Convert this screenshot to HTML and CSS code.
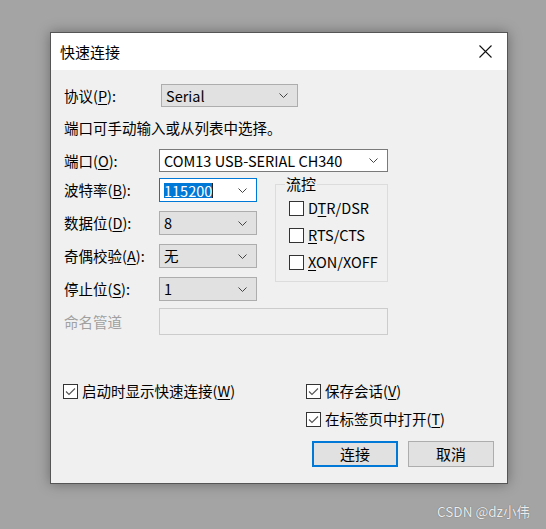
FILE: index.html
```html
<!DOCTYPE html>
<html lang="zh-CN">
<head>
<meta charset="utf-8">
<title>快速连接</title>
<link rel="stylesheet" href="styles.css">
</head>
<body>
<div class="desk">
  <div class="dialog">
    <div class="titlebar">
      <span class="title">快速连接</span>
      <svg class="close" width="13" height="13" viewBox="0 0 13 13"><path d="M0.5 0.5 L12.5 12.5 M12.5 0.5 L0.5 12.5" stroke="#111" stroke-width="1.1" fill="none"/></svg>
    </div>
    <div class="body">
      <div class="row proto">
        <span class="lbl">协议(<u>P</u>):</span>
        <div class="combo gray w-proto"><span class="val">Serial</span><svg class="chev" width="9" height="5" viewBox="0 0 9 5"><path d="M0.5 0.5 L4.5 4.5 L8.5 0.5" stroke="#444" fill="none"/></svg></div>
      </div>
      <div class="hint">端口可手动输入或从列表中选择。</div>
      <div class="row port">
        <span class="lbl">端口(<u>O</u>):</span>
        <div class="combo white w-wide"><span class="val">COM13 USB-SERIAL CH340</span><svg class="chev" width="9" height="5" viewBox="0 0 9 5"><path d="M0.5 0.5 L4.5 4.5 L8.5 0.5" stroke="#444" fill="none"/></svg></div>
      </div>
      <div class="mid">
        <div class="params">
          <div class="row prow">
            <span class="lbl">波特率(<u>B</u>):</span>
            <div class="combo white focus w-small"><span class="val"><span class="sel">115200</span><span class="caret"></span></span><svg class="chev" width="9" height="5" viewBox="0 0 9 5"><path d="M0.5 0.5 L4.5 4.5 L8.5 0.5" stroke="#444" fill="none"/></svg></div>
          </div>
          <div class="row prow">
            <span class="lbl">数据位(<u>D</u>):</span>
            <div class="combo gray w-small"><span class="val">8</span><svg class="chev" width="9" height="5" viewBox="0 0 9 5"><path d="M0.5 0.5 L4.5 4.5 L8.5 0.5" stroke="#444" fill="none"/></svg></div>
          </div>
          <div class="row prow">
            <span class="lbl">奇偶校验(<u>A</u>):</span>
            <div class="combo gray w-small"><span class="val">无</span><svg class="chev" width="9" height="5" viewBox="0 0 9 5"><path d="M0.5 0.5 L4.5 4.5 L8.5 0.5" stroke="#444" fill="none"/></svg></div>
          </div>
          <div class="row prow">
            <span class="lbl">停止位(<u>S</u>):</span>
            <div class="combo gray w-small"><span class="val">1</span><svg class="chev" width="9" height="5" viewBox="0 0 9 5"><path d="M0.5 0.5 L4.5 4.5 L8.5 0.5" stroke="#444" fill="none"/></svg></div>
          </div>
        </div>
        <fieldset class="flow">
          <legend>流控</legend>
          <div class="chk"><span class="box"></span><span>D<u>T</u>R/DSR</span></div>
          <div class="chk"><span class="box"></span><span><u>R</u>TS/CTS</span></div>
          <div class="chk"><span class="box"></span><span><u>X</u>ON/XOFF</span></div>
        </fieldset>
      </div>
      <div class="row pipe-row">
        <span class="lbl dis">命名管道</span>
        <div class="pipe"></div>
      </div>
      <div class="bottom">
        <div class="left">
          <div class="chk"><span class="box"><svg width="13" height="13" viewBox="0 0 13 13"><path d="M2 6.5 L5 9.5 L11 3.5" stroke="#555" stroke-width="1.1" fill="none"/></svg></span><span>启动时显示快速连接(<u>W</u>)</span></div>
        </div>
        <div class="right">
          <div class="chk"><span class="box"><svg width="13" height="13" viewBox="0 0 13 13"><path d="M2 6.5 L5 9.5 L11 3.5" stroke="#555" stroke-width="1.1" fill="none"/></svg></span><span>保存会话(<u>V</u>)</span></div>
          <div class="chk second"><span class="box"><svg width="13" height="13" viewBox="0 0 13 13"><path d="M2 6.5 L5 9.5 L11 3.5" stroke="#555" stroke-width="1.1" fill="none"/></svg></span><span>在标签页中打开(<u>T</u>)</span></div>
          <div class="buttons">
            <button class="btn default">连接</button>
            <button class="btn">取消</button>
          </div>
        </div>
      </div>
    </div>
  </div>
  <div class="watermark">CSDN @dz小伟</div>
</div>
</body>
</html>
```
FILE: styles.css
```css
* { box-sizing: border-box; }
html, body { margin: 0; padding: 0; }
body {
  width: 546px;
  height: 529px;
  overflow: hidden;
  background: #a4a4a4;
  font-family: "Noto Sans CJK SC", "Noto Sans", sans-serif;
  font-size: 14.5px;
  line-height: 20px;
  color: #000;
}
.desk {
  position: relative;
  width: 546px;
  height: 529px;
  padding: 32px 0 0 50px;
}
.dialog {
  width: 458px;
  height: 452px;
  border: 1px solid #555;
  background: #f0f0f0;
  box-shadow: 0 0 12px rgba(0,0,0,0.35);
  display: flex;
  flex-direction: column;
}
.titlebar {
  height: 37px;
  background: #fff;
  display: flex;
  align-items: center;
  justify-content: space-between;
  padding: 0 15px 0 9px;
  flex: none;
}
.title { font-size: 15px; }
.close { display: block; }
.body {
  padding: 14px 13px 0 13px;
  display: flex;
  flex-direction: column;
}
.row {
  display: flex;
  align-items: center;
}
.lbl {
  width: 95px;
  flex: none;
  white-space: nowrap;
}
.lbl.dis { color: #a0a0a0; }
u { text-decoration: underline; text-underline-offset: 2px; text-decoration-thickness: 1px; }
.combo {
  position: relative;
  display: flex;
  align-items: center;
  justify-content: space-between;
  padding: 0 9px 0 4px;
  border: 1px solid #adadad;
  height: 23px;
  flex: none;
}
.combo.gray { background: #e1e1e1; }
.combo.white { background: #fff; border-color: #7a7a7a; }
.combo.focus { border-color: #0078d7; }
.w-proto { width: 137px; margin-left: 2px; }
.w-wide { width: 229px; }
.w-small { width: 98px; height: 24px; }
.val { display: flex; align-items: center; }
.sel {
  background: #0078d7;
  color: #fff;
  line-height: 15px;
}
.caret { width: 1px; height: 15px; background: #222; }
.chev { display: block; }
.proto { height: 23px; }
.hint { margin-top: 11px; }
.port { margin-top: 11px; }
.mid {
  margin-top: 2px;
  display: flex;
  align-items: flex-start;
}
.params {
  padding-top: 4px;
  display: flex;
  flex-direction: column;
  gap: 9px;
  width: 193px;
}
.flow {
  margin: 0 0 0 18px;
  width: 113px;
  border: 1px solid #dcdcdc;
  padding: 4px 4px 9px 13px;
  min-width: 0;
}
.flow legend {
  padding: 0 1px;
  margin-left: -4px;
  font-size: 15px;
  line-height: 20px;
}
.chk {
  display: flex;
  align-items: center;
  height: 20px;
  white-space: nowrap;
}
.flow .chk + .chk { margin-top: 7px; }
.box {
  width: 15px;
  height: 15px;
  border: 1px solid #333;
  background: #fff;
  margin-right: 4px;
  flex: none;
  display: flex;
  align-items: center;
  justify-content: center;
}
.box svg { display: block; }
.pipe-row { margin-top: 7px; }
.pipe {
  width: 229px;
  height: 27px;
  border: 1px solid #cccccc;
  background: #f0f0f0;
}
.bottom {
  margin-top: 46px;
  display: flex;
}
.left { flex: 1; margin-left: -1px; }
.right {
  width: 188px;
  display: flex;
  flex-direction: column;
}
.chk.second { margin-top: 8px; }
.buttons {
  margin-top: 12px;
  padding-left: 6px;
  display: flex;
  gap: 10px;
}
.btn {
  width: 86px;
  height: 26px;
  background: #e1e1e1;
  border: 1px solid #adadad;
  font-family: "Noto Sans CJK SC", "Noto Sans", sans-serif;
  font-size: 15px;
  line-height: 20px;
  color: #000;
  padding: 0;
}
.btn.default { border: 2px solid #0078d7; }
.watermark {
  position: absolute;
  right: 16px;
  bottom: 8px;
  color: #ededed;
  font-size: 13.5px;
  text-shadow: 0 0 1px rgba(0,0,0,0.5);
}
```
